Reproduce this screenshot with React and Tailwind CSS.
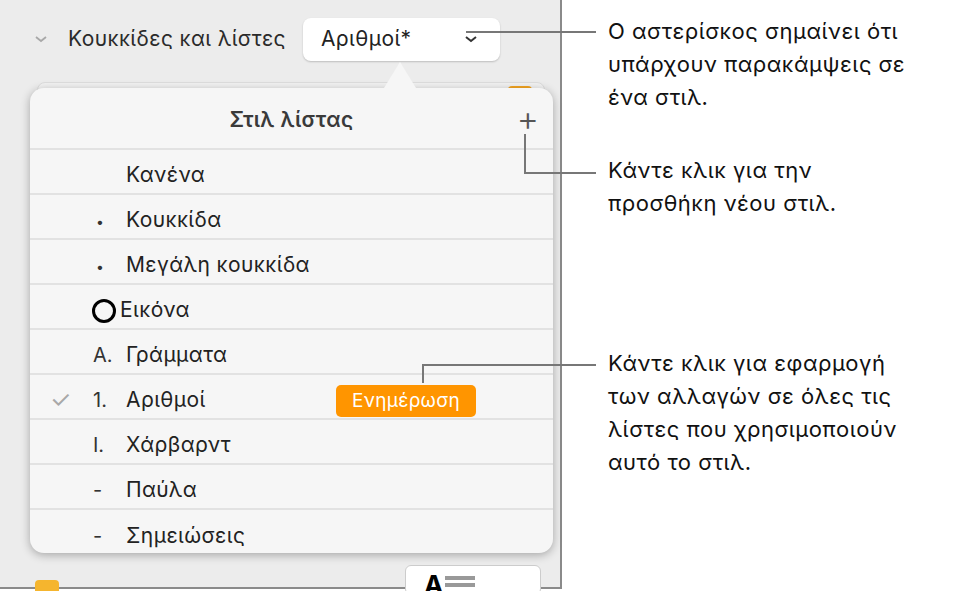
export default function App() {
  const rows = [
    { m: "", t: "Κανένα" },
    { m: "•", t: "Κουκκίδα", small: true },
    { m: "•", t: "Μεγάλη κουκκίδα", small: true },
    { m: "O", t: "Εικόνα", circle: true },
    { m: "A.", t: "Γράμματα" },
    { m: "1.", t: "Αριθμοί", check: true, upd: true },
    { m: "I.", t: "Χάρβαρντ" },
    { m: "-", t: "Παύλα" },
    { m: "-", t: "Σημειώσεις" },
  ];
  const font = { fontFamily: "Inter, 'Noto Sans', sans-serif" };
  return (
    <div className="relative w-[968px] h-[591px] bg-white overflow-hidden flex" style={font}>
      <div className="relative w-[562px] h-[589px] bg-[#ececec] border-r-2 border-b-2 border-[#8a8a8a]">
        <div className="flex items-center h-[80px] pl-[34px] pb-[2px]">
          <svg width="14" height="10" viewBox="0 0 14 10" className="mr-[20px]"><path d="M2 3l5 4 5-4" fill="none" stroke="#a8a8a8" strokeWidth="1.8" /></svg>
          <span className="text-[21px] tracking-[0.4px] text-[#2a2a2a]">Κουκκίδες και λίστες</span>
          <div className="ml-[17px] w-[197px] h-[43px] bg-white rounded-[8px] shadow-[0_1px_2px_rgba(0,0,0,0.2)] flex items-center justify-between pl-[18px] pr-[22px] text-[21px] tracking-[0.4px] text-[#222]">
            <span>Αριθμοί*</span>
            <svg width="14" height="10" viewBox="0 0 14 10"><path d="M2 3l5 4 5-4" fill="none" stroke="#333" strokeWidth="2" /></svg>
          </div>
        </div>
        <div className="absolute left-[37px] top-[82px] w-[508px] h-[20px] bg-[#f3f3f3] rounded-t-[8px] border border-[#ddd]" />
        <div className="absolute left-[508px] top-[86px] w-[24px] h-[10px] bg-[#f5a623] rounded-t-[4px]" />
        <div className="absolute left-[35px] top-[580px] w-[24px] h-[14px] bg-[#f5b52e] rounded-[4px]" />
        <div className="absolute left-[405px] top-[565px] w-[136px] h-[30px] bg-white rounded-[6px] border border-[#ccc] flex items-start pl-[18px] pt-[6px] overflow-hidden">
          <span className="text-[26px] font-bold leading-none">A</span>
          <div className="ml-[2px] mt-[4px] flex flex-col gap-[3px]"><div className="w-[30px] h-[4px] bg-[#999]" /><div className="w-[30px] h-[4px] bg-[#999]" /></div>
        </div>
        {/* popover */}
        <div className="absolute left-[30px] top-[88px] w-[523px] h-[465px] bg-[#f6f6f6] rounded-[14px] shadow-[0_2px_10px_rgba(0,0,0,0.3)]">
          <div className="absolute left-[354px] top-[-26px] w-0 h-0 border-l-[16px] border-r-[16px] border-b-[26px] border-l-transparent border-r-transparent border-b-[#f6f6f6]" />
          <div className="relative h-[62px] flex items-center justify-center pt-[4px] border-b-2 border-[#e2e2e2]">
            <span className="text-[21px] font-semibold tracking-[0.4px] text-[#3a3a3a]">Στιλ λίστας</span>
            <span className="absolute right-[14px] top-[14px] text-[34px] leading-none text-[#555] font-light">+</span>
          </div>
          {rows.map((r, i) => (
            <div key={i} className={`relative h-[45px] flex items-center pt-[6px] ${i < rows.length - 1 ? "border-b-2 border-[#e2e2e2]" : ""}`}>
              {r.check && <span className="absolute left-[20px] text-[24px] text-[#a8a8a8]">✓</span>}
              <span className={`text-[20px] text-[#333] ${r.circle ? "w-[96px] pl-[62px]" : "w-[96px] pl-[63px]"}`}>
                {r.circle ? <span className="inline-block w-[24px] h-[24px] rounded-full border-[3px] border-black align-middle" /> : r.small ? <span className="ml-[3px] text-[14px]">{r.m}</span> : r.m}
              </span>
              <span className={`text-[21px] tracking-[0.4px] text-[#222] ${r.circle ? "-ml-[6px]" : ""}`}>{r.t}</span>
              {r.upd && <span className="absolute left-[306px] top-[10px] h-[32px] px-[16px] bg-[#ff9500] rounded-[5px] text-white text-[19px] tracking-[0.3px] flex items-center">Ενημέρωση</span>}
            </div>
          ))}
        </div>
      </div>
      {/* callout lines */}
      <div className="absolute left-[466px] top-[31px] w-[130px] h-[2px] bg-[#777]" />
      <div className="absolute left-[524px] top-[134px] w-[2px] h-[40px] bg-[#777]" />
      <div className="absolute left-[524px] top-[172px] w-[72px] h-[2px] bg-[#777]" />
      <div className="absolute left-[422px] top-[365px] w-[2px] h-[18px] bg-[#777]" />
      <div className="absolute left-[422px] top-[364px] w-[174px] h-[2px] bg-[#777]" />
      <div className="absolute left-[608px] top-[15px] w-[360px] text-[22px] tracking-[0.5px] leading-[33px] text-[#111] flex flex-col">
        <p>Ο αστερίσκος σημαίνει ότι<br />υπάρχουν παρακάμψεις σε<br />ένα στιλ.</p>
        <p className="mt-[40px]">Κάντε κλικ για την<br />προσθήκη νέου στιλ.</p>
        <p className="mt-[127px]">Κάντε κλικ για εφαρμογή<br />των αλλαγών σε όλες τις<br />λίστες που χρησιμοποιούν<br />αυτό το στιλ.</p>
      </div>
    </div>
  );
}
